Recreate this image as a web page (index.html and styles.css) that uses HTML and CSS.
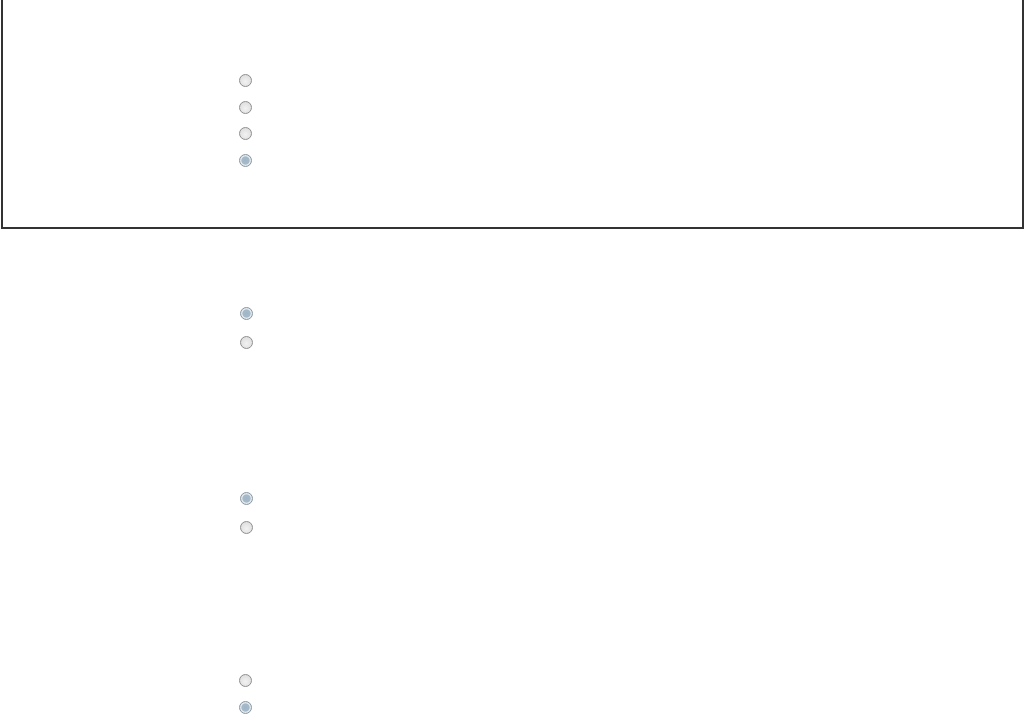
FILE: index.html
```html
<!DOCTYPE html>
<html>
<head>
<meta charset="utf-8">
<link rel="stylesheet" href="styles.css">
</head>
<body>
<div class="box">
  <div class="group group-top">
    <label class="opt"><input type="radio" name="a"></label>
    <label class="opt"><input type="radio" name="a"></label>
    <label class="opt"><input type="radio" name="a"></label>
    <label class="opt"><input type="radio" name="a" checked></label>
  </div>
</div>
<div class="group group-wide g1">
  <label class="opt"><input type="radio" name="b" checked></label>
  <label class="opt"><input type="radio" name="b"></label>
</div>
<div class="group group-wide g2">
  <label class="opt"><input type="radio" name="c" checked></label>
  <label class="opt"><input type="radio" name="c"></label>
</div>
<div class="group group-mid g3">
  <label class="opt"><input type="radio" name="d"></label>
  <label class="opt"><input type="radio" name="d" checked></label>
</div>
</body>
</html>
```
FILE: styles.css
```css
html, body {
  margin: 0;
  padding: 0;
  background: #ffffff;
  font-family: "Liberation Sans", Arial, sans-serif;
  overflow: hidden;
}

.box {
  margin: 0 1px 0 1px;
  height: 227px;
  border-left: 2px solid #333333;
  border-right: 2px solid #333333;
  border-bottom: 2px solid #333333;
  box-sizing: content-box;
  padding-left: 236px;
}

.group {
  display: flex;
  flex-direction: column;
}

.group-top {
  padding-top: 74px;
  gap: 13.7px;
}

.group-wide {
  padding-left: 240px;
  gap: 16px;
}

.group-mid {
  padding-left: 239px;
  gap: 14px;
}

.g1 { margin-top: 78px; }
.g2 { margin-top: 143px; }
.g3 { margin-top: 140px; }

.opt {
  display: block;
  height: 13px;
  line-height: 0;
}

.opt input {
  -webkit-appearance: none;
  appearance: none;
  margin: 0;
  width: 13px;
  height: 13px;
  border-radius: 50%;
  border: 1px solid #8e8e8e;
  background: radial-gradient(circle at 50% 60%, #f2f2f2 0%, #e0e0e0 70%, #d4d4d4 100%);
  box-sizing: border-box;
  display: block;
}

.opt input:checked {
  border-color: #8796a2;
  background: radial-gradient(circle, #9fb6c7 0%, #a6bac9 48%, #e4eaee 58%, #d9e0e6 90%, #c9d1d8 100%);
}
```
